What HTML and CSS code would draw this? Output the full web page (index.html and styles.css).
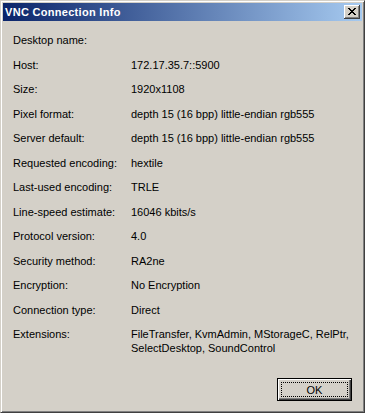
FILE: index.html
```html
<!DOCTYPE html>
<html lang="en">
<head>
    <meta charset="UTF-8">
    <title>VNC Connection Info</title>
    <link rel="stylesheet" href="styles.css">
</head>
<body>
    <div class="window">
        <div class="titlebar">
            <span class="title">VNC Connection Info</span>
            <div class="close-button">
                <svg width="8" height="7" viewBox="0 0 8 7">
                    <path d="M0 0h2v1h1v1h2v-1h1v-1h2v1h-1v1h-1v1h-1v1h1v1h1v1h1v1h-2v-1h-1v-1h-2v1h-1v1h-2v-1h1v-1h1v-1h1v-1h-1v-1h-1v-1h-1z" fill="#000"/>
                </svg>
            </div>
        </div>

        <div class="content">
            <div class="info-grid">
                <div class="label">Desktop name:</div><div class="value"></div>
                <div class="label">Host:</div><div class="value">172.17.35.7::5900</div>
                <div class="label">Size:</div><div class="value">1920x1108</div>
                <div class="label">Pixel format:</div><div class="value">depth 15 (16 bpp) little-endian rgb555</div>
                <div class="label">Server default:</div><div class="value">depth 15 (16 bpp) little-endian rgb555</div>
                <div class="label">Requested encoding:</div><div class="value">hextile</div>
                <div class="label">Last-used encoding:</div><div class="value">TRLE</div>
                <div class="label">Line-speed estimate:</div><div class="value">16046 kbits/s</div>
                <div class="label">Protocol version:</div><div class="value">4.0</div>
                <div class="label">Security method:</div><div class="value">RA2ne</div>
                <div class="label">Encryption:</div><div class="value">No Encryption</div>
                <div class="label">Connection type:</div><div class="value">Direct</div>
                <div class="label">Extensions:</div><div class="value">FileTransfer, KvmAdmin, MStorageC, RelPtr, SelectDesktop, SoundControl</div>
            </div>

            <div class="actions">
                <button type="button" class="ok-button"><span class="focus">OK</span></button>
            </div>
        </div>
    </div>
</body>
</html>
```

FILE: styles.css
```css
body {
    margin: 0;
    padding: 0;
    font-family: Tahoma, "Liberation Sans", Arial, sans-serif;
    font-size: 11px;
    background-color: #d4d0c8;
}

.window {
    width: 365px;
    height: 413px;
    box-sizing: border-box;
    background-color: #d4d0c8;
    border: 1px solid;
    border-color: #d4d0c8 #404040 #404040 #d4d0c8;
    padding: 1px;
    display: flex;
    flex-direction: column;
    box-shadow: inset 1px 1px 0 #fff, inset -1px -1px 0 #808080;
}

.window > * {
    flex-shrink: 0;
}

.titlebar {
    margin: 1px 1px 0 1px;
    height: 18px;
    background: linear-gradient(to right, #0a246a, #a6caf0);
    display: flex;
    align-items: center;
    justify-content: space-between;
    padding: 0 2px 0 2px;
}

.title {
    color: #fff;
    font-weight: bold;
    font-size: 11px;
    letter-spacing: 0.3px;
}

.close-button {
    width: 16px;
    height: 14px;
    box-sizing: border-box;
    background-color: #d4d0c8;
    box-shadow: inset -1px -1px 0 #404040, inset 1px 1px 0 #fff, inset -2px -2px 0 #808080;
    display: flex;
    align-items: center;
    justify-content: center;
    padding: 0 1px 1px 0;
}

.close-button svg {
    display: block;
}

.content {
    flex: 1;
    display: flex;
    flex-direction: column;
    padding: 12px 11px 0 11px;
}

.info-grid {
    display: grid;
    grid-template-columns: 118px 1fr;
    grid-auto-rows: 24.5px;
    color: #000;
}

.info-grid .label,
.info-grid .value {
    line-height: 14px;
}

.actions {
    margin-top: auto;
    margin-bottom: 10px;
    display: flex;
    justify-content: flex-end;
}

.ok-button {
    width: 75px;
    height: 23px;
    padding: 3px;
    font-family: inherit;
    font-size: 11px;
    color: #000;
    background-color: #d4d0c8;
    border: 1px solid #000;
    box-shadow: inset 1px 1px 0 #fff, inset -1px -1px 0 #404040, inset -2px -2px 0 #808080;
    display: flex;
}

.ok-button .focus {
    flex: 1;
    border: 1px dotted #000;
    display: flex;
    align-items: center;
    justify-content: center;
}
```
